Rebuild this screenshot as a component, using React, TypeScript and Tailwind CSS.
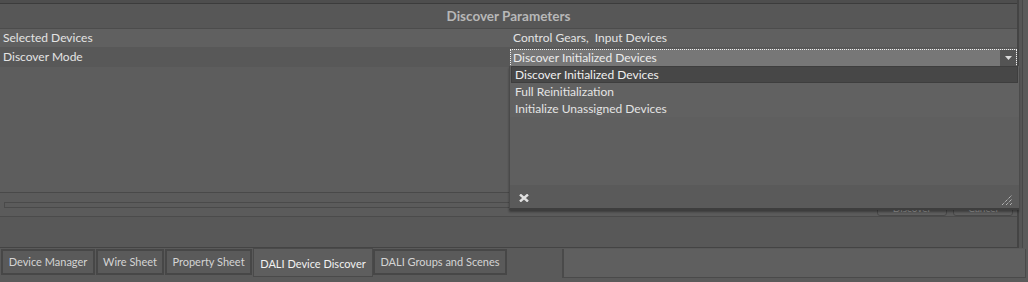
import React from "react";

const tabs = [
  { label: "Device Manager", w: "w-[94px]" },
  { label: "Wire Sheet", w: "w-[68px]" },
  { label: "Property Sheet", w: "w-[87px]" },
];

export default function App() {
  return (
    <div className="relative w-[1028px] h-[282px] overflow-hidden bg-[#5a5a5a] font-['Lato','Liberation_Sans',sans-serif] text-[12px] text-[#e4e4e4] flex flex-col">
      {/* upper region */}
      <div className="flex h-[248px]">
        <div className="w-[1019px] flex flex-col border-r-2 border-b border-[#444444]">
          <div className="h-[3px] bg-[#4e4e4e]" />
          <div className="h-px bg-[#3c3c3c]" />
          <div className="h-[25px] bg-[#575757] border-b border-[#4c4c4c] flex items-center justify-center font-bold text-[13.5px] text-[#b8b8b8]">
            Discover Parameters
          </div>
          <div className="h-[18px] bg-[#606060] flex items-center">
            <div className="w-[510px] pl-[3px]">Selected Devices</div>
            <div className="pl-[3px]">Control Gears,&nbsp; Input Devices</div>
          </div>
          <div className="h-[20px] bg-[#585858] flex items-center">
            <div className="w-[510px] pl-[3px]">Discover Mode</div>
            <div className="flex-1 h-[18px] mt-[1px] border border-dotted border-[#f0f0f0] bg-[#777777] flex items-center">
              <div className="flex-1 pl-[2px] text-[#ececec]">Discover Initialized Devices</div>
              <div className="w-[16px] h-full bg-[#545454] flex items-center justify-center">
                <svg width="7" height="4" viewBox="0 0 7 4">
                  <path d="M0 0 H7 L3.5 4 Z" fill="#dcdcdc" />
                </svg>
              </div>
            </div>
          </div>
          <div className="h-[126px] bg-[#5d5d5d] border-b border-[#494949]" />
          <div className="h-[24px] bg-[#5b5b5b] flex items-center border-b border-[#4b4b4b]">
            <div className="ml-[4px] w-[506px] h-[6px] border border-[#4a4a4a]" />
            <div className="ml-auto flex gap-[6px] mr-[4px] mt-[8px]">
              <div className="w-[70px] h-[15px] rounded-[3px] border border-[#484848] bg-[#5e5e5e] text-[10px] text-[#a0a0a0] flex items-center justify-center">Discover</div>
              <div className="w-[60px] h-[15px] rounded-[3px] border border-[#484848] bg-[#5e5e5e] text-[10px] text-[#a0a0a0] flex items-center justify-center">Cancel</div>
            </div>
          </div>
          <div className="flex-1 bg-[#585858]" />
        </div>
        <div className="w-[4px] bg-[#555555] border-r border-[#474747]" />
        <div className="flex-1 bg-[#5a5a5a]" />
      </div>

      {/* tab bar */}
      <div className="flex h-[30px] items-start text-[11px]">
        <div className="flex mt-px pl-px">
          {tabs.map((t) => (
            <div
              key={t.label}
              className={`${t.w} h-[26px] border-2 border-[#474747] bg-[#5a5a5a] text-[#d4d4d4] flex items-center justify-center mr-px`}
            >
              {t.label}
            </div>
          ))}
          <div className="w-[120px] h-[29px] -mt-px border border-[#4a4a4a] bg-[#5e5e5e] text-[#f2f2f2] flex items-center justify-center pt-[3px]">
            DALI Device Discover
          </div>
          <div className="w-[134px] h-[26px] border-2 border-[#474747] bg-[#5a5a5a] text-[#d4d4d4] flex items-center justify-center">
            DALI Groups and Scenes
          </div>
        </div>
        <div className="ml-[55px] mt-px w-[464px] h-[29px] bg-[#5f5f5f] border-l-2 border-b border-r border-[#4a4a4a]" />
      </div>
      <div className="flex-1" />

      {/* dropdown popup */}
      <div className="absolute left-[509px] top-[66px] w-[510px] h-[144px] flex flex-col bg-[#616161] border-l border-[#4a4a4a] border-b-2 border-b-[#3e3e3e] shadow-[0_2px_2px_rgba(0,0,0,0.35)]">
        <div className="h-[17px] mx-px bg-[#474747] border border-[#3e3e3e] flex items-center pl-[3px] text-[#f0f0f0]">
          Discover Initialized Devices
        </div>
        <div className="h-[17px] flex items-center pl-[5px]">Full Reinitialization</div>
        <div className="h-[17px] flex items-center pl-[5px]">Initialize Unassigned Devices</div>
        <div className="flex-1 bg-[#5f5f5f]" />
        <div className="h-[23px] bg-[#5a5a5a] flex items-center px-[9px]">
          <svg width="10" height="8" viewBox="0 0 10 8" className="mt-[2px]">
            <path d="M1 0.5 L9 7.5 M9 0.5 L1 7.5" stroke="#e0e0e0" strokeWidth="2.4" />
          </svg>
          <svg width="10" height="10" viewBox="0 0 10 10" className="ml-auto mt-[6px] -mr-[2px]">
            <path d="M0 10 L10 0 M4 10 L10 4 M8 10 L10 8" stroke="#dcdcdc" strokeWidth="1" strokeDasharray="1 1" />
          </svg>
        </div>
      </div>
    </div>
  );
}
